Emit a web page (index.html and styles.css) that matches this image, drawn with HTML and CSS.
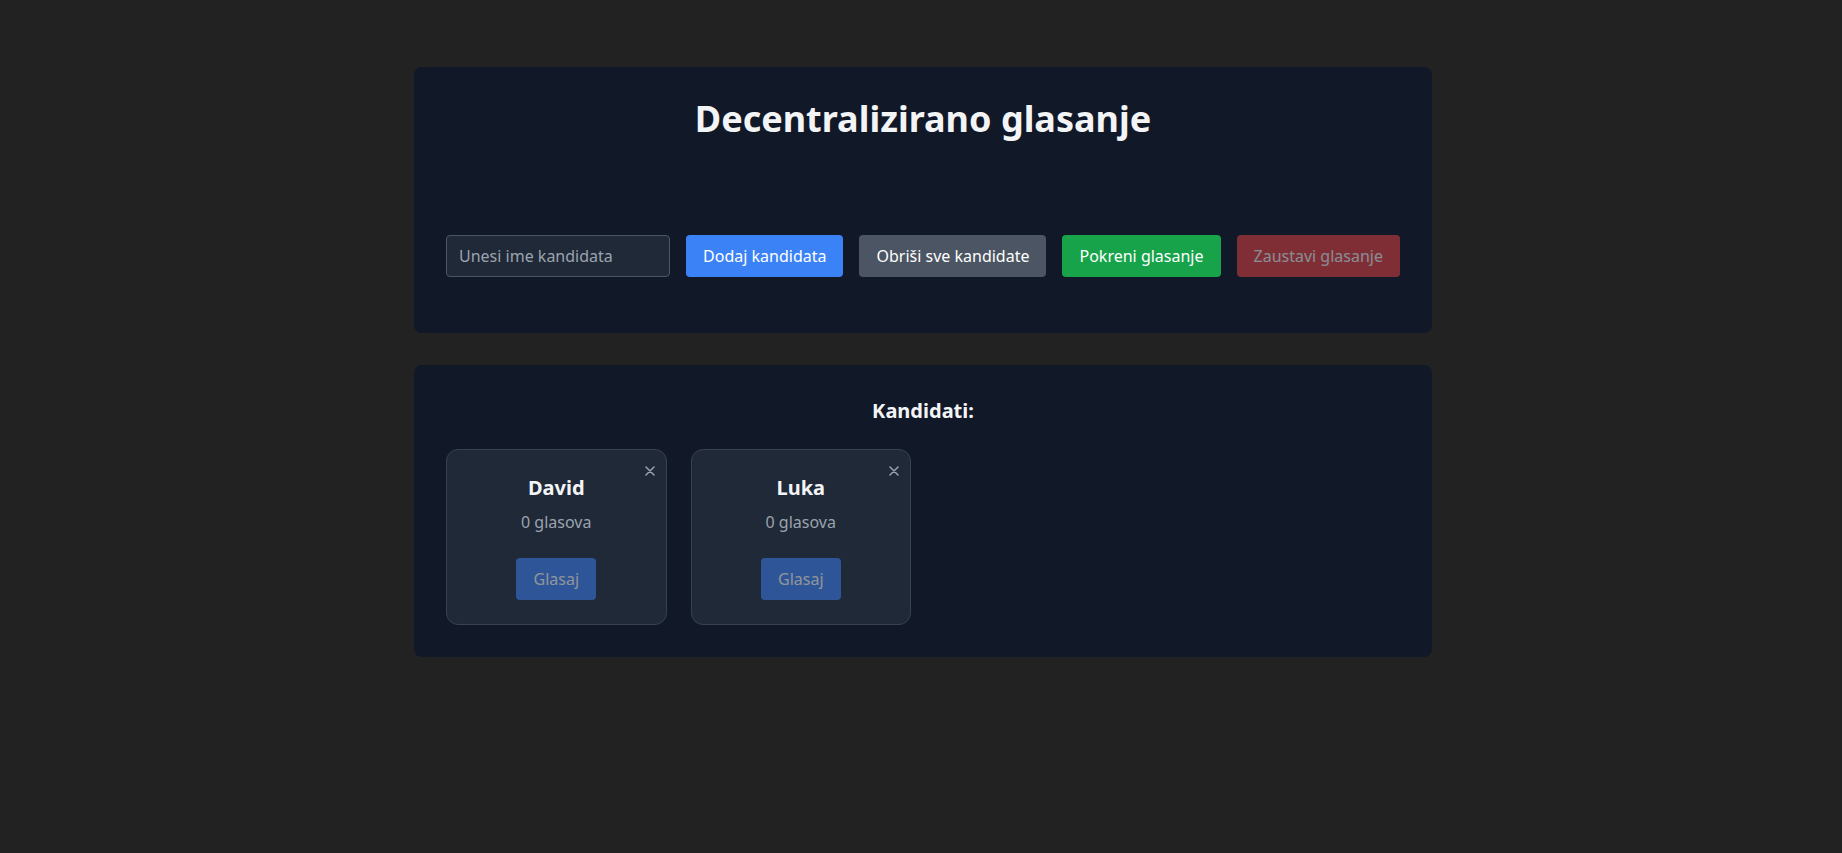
FILE: index.html
```html
<!DOCTYPE html>
<html lang="hr">
<head>
<meta charset="utf-8">
<title>Decentralizirano glasanje</title>
<link rel="stylesheet" href="styles.css">
</head>
<body>
<main class="wrap">
  <section class="panel panel-top">
    <h1 class="title">Decentralizirano glasanje</h1>
    <div class="controls">
      <input class="name-input" type="text" placeholder="Unesi ime kandidata">
      <button class="btn btn-blue">Dodaj kandidata</button>
      <button class="btn btn-gray">Obriši sve kandidate</button>
      <button class="btn btn-green">Pokreni glasanje</button>
      <button class="btn btn-red btn-disabled">Zaustavi glasanje</button>
    </div>
  </section>

  <section class="panel panel-list">
    <h2 class="list-title">Kandidati:</h2>
    <div class="grid">
      <div class="cand">
        <span class="close"><svg width="10" height="10" viewBox="0 0 10 10"><path d="M1 1 L9 9 M9 1 L1 9" stroke="#9ca3af" stroke-width="1.5" stroke-linecap="round"/></svg></span>
        <h3 class="cand-name">David</h3>
        <p class="cand-votes">0 glasova</p>
        <button class="btn btn-blue btn-disabled">Glasaj</button>
      </div>
      <div class="cand">
        <span class="close"><svg width="10" height="10" viewBox="0 0 10 10"><path d="M1 1 L9 9 M9 1 L1 9" stroke="#9ca3af" stroke-width="1.5" stroke-linecap="round"/></svg></span>
        <h3 class="cand-name">Luka</h3>
        <p class="cand-votes">0 glasova</p>
        <button class="btn btn-blue btn-disabled">Glasaj</button>
      </div>
    </div>
  </section>
</main>
</body>
</html>
```
FILE: styles.css
```css
* { box-sizing: border-box; }
html, body { margin: 0; padding: 0; }
body {
  background: #222222;
  font-family: "Noto Sans", "Open Sans", sans-serif;
  color: #f3f4f6;
  padding-left: 4px;
}
.wrap {
  width: 1018px;
  margin: 67px auto 0;
}
.panel {
  background: #111827;
  border-radius: 8px;
  padding: 32px;
}
.panel-top {
  padding-bottom: 56px;
  margin-bottom: 32px;
}
.title {
  margin: 0 0 96px;
  font-size: 36px;
  line-height: 40px;
  font-weight: 700;
  text-align: center;
  color: #f3f4f6;
}
.controls {
  display: flex;
  gap: 16px;
}
.name-input {
  flex: 1;
  min-width: 0;
  height: 42px;
  background: #1f2937;
  border: 1px solid #4b5563;
  border-radius: 4px;
  padding: 0 12px;
  font-family: inherit;
  font-size: 16px;
  color: #f3f4f6;
  outline: none;
}
.name-input::placeholder { color: #9ca3af; }
.btn {
  font-family: inherit;
  font-size: 16px;
  line-height: 24px;
  padding: 8px 16px;
  border: 1px solid transparent;
  border-radius: 4px;
  color: #ffffff;
  cursor: pointer;
  white-space: nowrap;
}
.btn-blue { background: #3b82f6; }
.btn-gray { background: #4b5563; }
.btn-green { background: #16a34a; }
.btn-red { background: #ef4444; }
.btn-disabled { opacity: 0.5; cursor: not-allowed; }

.list-title {
  margin: 0 0 24px;
  font-size: 20px;
  line-height: 28px;
  font-weight: 700;
  text-align: center;
  color: #f3f4f6;
}
.grid {
  display: grid;
  grid-template-columns: repeat(4, 1fr);
  gap: 24px;
}
.cand {
  position: relative;
  background: #1f2937;
  border: 1px solid #374151;
  border-radius: 12px;
  padding: 24px;
  display: flex;
  flex-direction: column;
  align-items: center;
}
.close {
  position: absolute;
  top: 16px;
  right: 11px;
  width: 10px;
  height: 10px;
  display: block;
  line-height: 0;
}
.cand-name {
  margin: 0 0 8px;
  font-size: 20px;
  line-height: 28px;
  font-weight: 700;
  color: #f3f4f6;
}
.cand-votes {
  margin: 0 0 24px;
  font-size: 16px;
  line-height: 24px;
  color: #9ca3af;
}
```
